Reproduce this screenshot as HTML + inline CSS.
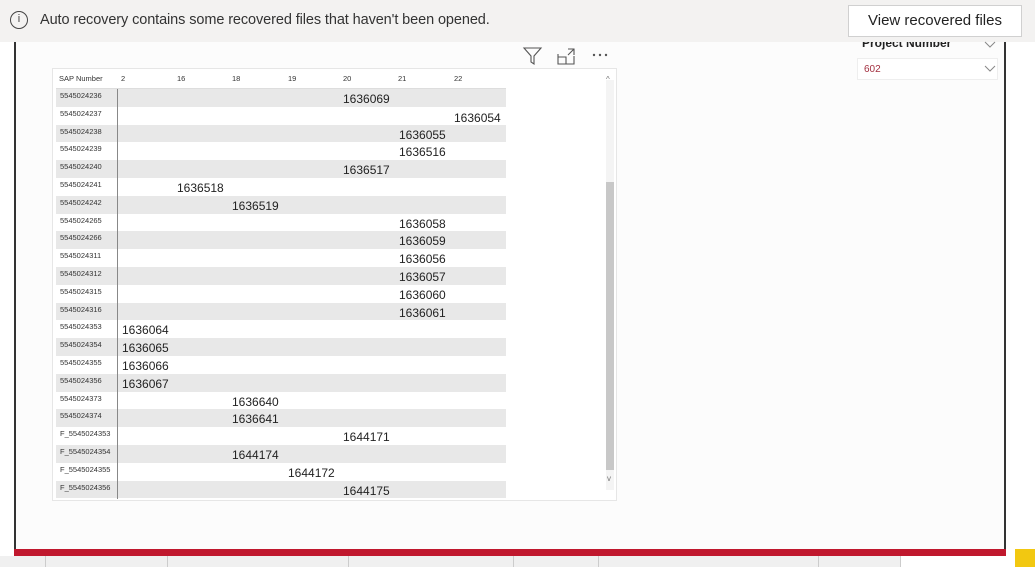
<!DOCTYPE html>
<html><head><meta charset="utf-8"><style>
*{margin:0;padding:0;box-sizing:border-box}
body{width:1035px;height:567px;overflow:hidden;background:#fff;font-family:"Liberation Sans",sans-serif;position:relative}
.a{position:absolute}
.row{position:absolute;left:56px;width:450px;height:17.8px}
.row.g{background:#e8e8e8}
.lab{position:absolute;left:4px;top:2px;font-size:7.5px;color:#333}
.val{position:absolute;top:3px;font-size:12px;color:#222}
.hd{position:absolute;top:74px;font-size:7.5px;color:#333}
</style></head><body>
<div class="a" style="left:0;top:0;width:1035px;height:42px;background:#f3f2f1"></div>
<div class="a" style="left:10px;top:11px;width:18px;height:18px;border:1.3px solid #444;border-radius:50%;font-size:11px;text-align:center;line-height:15px;color:#444">i</div>
<div class="a" style="left:40px;top:12px;font-size:14.5px;letter-spacing:-0.1px;color:#333">Auto recovery contains some recovered files that haven't been opened.</div>
<div class="a" style="left:848px;top:5px;width:174px;height:32px;background:#fff;border:1px solid #d0d0d0;font-size:15px;color:#222;text-align:center;line-height:30px">View recovered files</div>
<div class="a" style="left:14px;top:42px;width:2px;height:512px;background:#333"></div>
<div class="a" style="left:1004px;top:42px;width:2px;height:512px;background:#333"></div>
<div class="a" style="left:16px;top:42px;width:988px;height:508px;background:#fcfcfc"></div>
<div class="a" style="left:14px;top:549px;width:992px;height:7px;background:#c0182e"></div>
<div class="a" style="left:0;top:556px;width:1035px;height:11px;background:#f0f0f0"></div>
<div class="a" style="left:45px;top:556px;width:1px;height:11px;background:#ccc"></div>
<div class="a" style="left:167px;top:556px;width:1px;height:11px;background:#ccc"></div>
<div class="a" style="left:348px;top:556px;width:1px;height:11px;background:#ccc"></div>
<div class="a" style="left:513px;top:556px;width:1px;height:11px;background:#ccc"></div>
<div class="a" style="left:598px;top:556px;width:1px;height:11px;background:#ccc"></div>
<div class="a" style="left:818px;top:556px;width:1px;height:11px;background:#ccc"></div>
<div class="a" style="left:900px;top:556px;width:1px;height:11px;background:#ccc;"></div>
<div class="a" style="left:901px;top:556px;width:134px;height:11px;background:#fff"></div>
<div class="a" style="left:1015px;top:549px;width:20px;height:18px;background:#f2c811"></div>
<!-- slicer -->
<div class="a" style="left:862px;top:36px;font-size:12px;font-weight:bold;color:#222;clip-path:inset(6px 0 0 0)">Project Number</div>
<div class="a" style="left:857px;top:58px;width:141px;height:22px;border:1px solid #eee;background:#fff"></div>
<div class="a" style="left:864px;top:64px;font-size:10px;color:#a33040">602</div>
<svg class="a" style="left:983px;top:40px" width="14" height="36"><path d="M2 2l5 5 5-5M2 26l5 5 5-5" fill="none" stroke="#888" stroke-width="1"/></svg>
<!-- icons -->
<svg class="a" style="left:522px;top:46px" width="92" height="20"><path d="M2 2h17l-7 8v8l-3-2v-6z" fill="none" stroke="#555" stroke-width="1.1"/><path d="M36 8v10h16v-8M36 11h8v7M46 3h6v6M52 3l-6 6" fill="none" stroke="#555" stroke-width="1.1"/><circle cx="72" cy="9" r="1.2" fill="#555"/><circle cx="78" cy="9" r="1.2" fill="#555"/><circle cx="84" cy="9" r="1.2" fill="#555"/></svg>
<!-- visual -->
<div class="a" style="left:52px;top:68px;width:565px;height:433px;background:#fff;border:1px solid #e6e6e6"></div>
<div class="a" style="left:606px;top:80px;width:8px;height:410px;background:#f4f4f4"></div>
<div class="a" style="left:606px;top:182px;width:8px;height:288px;background:#c8c8c8"></div>
<div class="a" style="left:606px;top:75px;font-size:8px;color:#777">^</div>
<div class="a" style="left:607px;top:474px;font-size:8px;color:#777">v</div>
<div class="hd" style="left:59px">SAP Number</div>
<div class="hd" style="left:121px">2</div><div class="hd" style="left:177px">16</div><div class="hd" style="left:232px">18</div><div class="hd" style="left:288px">19</div><div class="hd" style="left:343px">20</div><div class="hd" style="left:398px">21</div><div class="hd" style="left:454px">22</div>
<div class="a" style="left:56px;top:88px;width:450px;height:1px;background:#ddd"></div>
<div class="row g" style="top:89px"><span class="lab">5545024236</span><span class="val" style="left:287px">1636069</span></div>
<div class="row" style="top:106.8px"><span class="lab">5545024237</span><span class="val" style="left:398px;top:4px">1636054</span></div>
<div class="row g" style="top:124.6px"><span class="lab">5545024238</span><span class="val" style="left:343px">1636055</span></div>
<div class="row" style="top:142.4px"><span class="lab">5545024239</span><span class="val" style="left:343px">1636516</span></div>
<div class="row g" style="top:160.2px"><span class="lab">5545024240</span><span class="val" style="left:287px">1636517</span></div>
<div class="row" style="top:178px"><span class="lab">5545024241</span><span class="val" style="left:121px">1636518</span></div>
<div class="row g" style="top:195.8px"><span class="lab">5545024242</span><span class="val" style="left:176px">1636519</span></div>
<div class="row" style="top:213.6px"><span class="lab">5545024265</span><span class="val" style="left:343px">1636058</span></div>
<div class="row g" style="top:231.4px"><span class="lab">5545024266</span><span class="val" style="left:343px">1636059</span></div>
<div class="row" style="top:249.2px"><span class="lab">5545024311</span><span class="val" style="left:343px">1636056</span></div>
<div class="row g" style="top:267px"><span class="lab">5545024312</span><span class="val" style="left:343px">1636057</span></div>
<div class="row" style="top:284.8px"><span class="lab">5545024315</span><span class="val" style="left:343px">1636060</span></div>
<div class="row g" style="top:302.6px"><span class="lab">5545024316</span><span class="val" style="left:343px">1636061</span></div>
<div class="row" style="top:320.4px"><span class="lab">5545024353</span><span class="val" style="left:66px">1636064</span></div>
<div class="row g" style="top:338.2px"><span class="lab">5545024354</span><span class="val" style="left:66px">1636065</span></div>
<div class="row" style="top:356px"><span class="lab">5545024355</span><span class="val" style="left:66px">1636066</span></div>
<div class="row g" style="top:373.8px"><span class="lab">5545024356</span><span class="val" style="left:66px">1636067</span></div>
<div class="row" style="top:391.6px"><span class="lab">5545024373</span><span class="val" style="left:176px">1636640</span></div>
<div class="row g" style="top:409.4px"><span class="lab">5545024374</span><span class="val" style="left:176px">1636641</span></div>
<div class="row" style="top:427.2px"><span class="lab">F_5545024353</span><span class="val" style="left:287px">1644171</span></div>
<div class="row g" style="top:445px"><span class="lab">F_5545024354</span><span class="val" style="left:176px">1644174</span></div>
<div class="row" style="top:462.8px"><span class="lab">F_5545024355</span><span class="val" style="left:232px">1644172</span></div>
<div class="row g" style="top:480.6px"><span class="lab">F_5545024356</span><span class="val" style="left:287px">1644175</span></div>
<div class="a" style="left:117px;top:89px;width:1px;height:410px;background:#888"></div>
</body></html>
